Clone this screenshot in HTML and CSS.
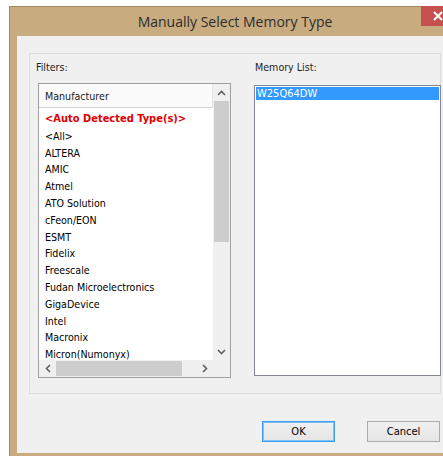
FILE: index.html
```html
<!DOCTYPE html>
<html>
<head>
<meta charset="utf-8">
<title>Manually Select Memory Type</title>
<link rel="stylesheet" href="styles.css">
</head>
<body>
<div class="window">
  <div class="titlebar">
    <span class="title">Manually Select Memory Type</span>
    <div class="close">
      <svg width="10" height="10" viewBox="0 0 10 10"><path d="M1 1 L9 9 M9 1 L1 9" stroke="#fff" stroke-width="2"/></svg>
    </div>
  </div>
  <div class="client">
    <div class="group">
      <div class="col">
        <div class="label label-filters">Filters:</div>
        <div class="listview">
          <div class="lv-body">
            <div class="lv-header"><span>Manufacturer</span></div>
            <ul class="lv-items">
              <li class="auto">&lt;Auto Detected Type(s)&gt;</li>
              <li>&lt;All&gt;</li>
              <li>ALTERA</li>
              <li>AMIC</li>
              <li>Atmel</li>
              <li>ATO Solution</li>
              <li>cFeon/EON</li>
              <li>ESMT</li>
              <li>Fidelix</li>
              <li>Freescale</li>
              <li>Fudan Microelectronics</li>
              <li>GigaDevice</li>
              <li>Intel</li>
              <li>Macronix</li>
              <li>Micron(Numonyx)</li>
            </ul>
          </div>
          <div class="vscroll">
            <div class="sb-btn"><svg width="9" height="6" viewBox="0 0 9 6"><path d="M1 5 L4.5 1.5 L8 5" fill="none" stroke="#606060" stroke-width="1.6"/></svg></div>
            <div class="sb-track"><div class="vthumb"></div></div>
            <div class="sb-btn"><svg width="9" height="6" viewBox="0 0 9 6"><path d="M1 1 L4.5 4.5 L8 1" fill="none" stroke="#606060" stroke-width="1.6"/></svg></div>
          </div>
          <div class="hscroll">
            <div class="sb-btn"><svg width="6" height="9" viewBox="0 0 6 9"><path d="M5 1 L1.5 4.5 L5 8" fill="none" stroke="#606060" stroke-width="1.6"/></svg></div>
            <div class="sb-track htrack"><div class="hthumb"></div></div>
            <div class="sb-btn"><svg width="6" height="9" viewBox="0 0 6 9"><path d="M1 1 L4.5 4.5 L1 8" fill="none" stroke="#606060" stroke-width="1.6"/></svg></div>
          </div>
          <div class="corner"></div>
        </div>
      </div>
      <div class="col">
        <div class="label label-memory">Memory List:</div>
        <div class="listbox">
          <div class="lb-item selected">W25Q64DW</div>
        </div>
      </div>
    </div>
    <div class="buttons">
      <button class="btn btn-default">OK</button>
      <button class="btn">Cancel</button>
    </div>
  </div>
</div>
</body>
</html>
```

FILE: styles.css
```css
html, body {
  margin: 0;
  padding: 0;
}

body {
  width: 443px;
  height: 456px;
  overflow: hidden;
  background: #ffffff;
  font-family: "DejaVu Sans Condensed", "DejaVu Sans", sans-serif;
  font-stretch: condensed;
  font-size: 10.6px;
  color: #000;
}

/* Window frame */
.window {
  position: relative;
  box-sizing: border-box;
  margin: 6px 0 0 9px;
  width: 452px;
  height: 450px;
  background: #c9ab80;
  border: 1px solid #a58b64;
  border-bottom: none;
  padding: 0 7px 3px 7px;
  display: flex;
  flex-direction: column;
}

.titlebar {
  height: 29px;
  flex: none;
  display: flex;
  align-items: center;
  justify-content: center;
}

.title {
  font-family: "Open Sans", "Noto Sans", sans-serif;
  font-stretch: normal;
  font-size: 14px;
  color: #2b2b2b;
}

.close {
  position: absolute;
  top: -1px;
  left: 411px;
  width: 45px;
  height: 20px;
  background: #c75050;
  display: flex;
  align-items: center;
  padding-left: 12px;
  box-sizing: border-box;
}

/* Client area */
.client {
  flex: 1;
  background: #f0f0f0;
  padding: 17px 12px 0 12px;
  display: flex;
  flex-direction: column;
}

.group {
  box-sizing: border-box;
  height: 341px;
  border: 1px solid #dcdcdc;
  padding: 0 0 0 8px;
  display: grid;
  grid-template-columns: 193px 187px;
  column-gap: 23px;
}

.col {
  display: flex;
  flex-direction: column;
}

.label {
  color: #1e1e1e;
  line-height: 14px;
  padding-top: 6px;
}

.label-filters {
  margin-left: -2px;
  margin-bottom: 9px;
}

.label-memory {
  margin-left: 1px;
  margin-bottom: 11px;
}

/* Manufacturer list view */
.listview {
  box-sizing: border-box;
  width: 193px;
  height: 295px;
  border: 1px solid #a0a0a0;
  background: #fff;
  display: grid;
  grid-template-columns: 1fr 17px;
  grid-template-rows: 1fr 17px;
  overflow: hidden;
}

.lv-body {
  overflow: hidden;
}

.lv-header {
  height: 24px;
  box-sizing: border-box;
  border-bottom: 1px solid #d5d5d5;
  border-right: 1px solid #e5e5e5;
  background: #fbfbfb;
  display: flex;
  align-items: center;
  padding-left: 6px;
  color: #1a1a1a;
}

.lv-items {
  list-style: none;
  margin: 0;
  padding: 3px 0 0 0;
}

.lv-items li {
  line-height: 16.8px;
  padding-left: 6px;
  white-space: nowrap;
}

.lv-items li.auto {
  color: #e00000;
  font-weight: bold;
  font-size: 11px;
}

.vscroll {
  background: #f0f0f0;
  display: flex;
  flex-direction: column;
}

.sb-btn {
  flex: none;
  width: 17px;
  height: 17px;
  display: flex;
  align-items: center;
  justify-content: center;
}

.sb-track {
  flex: 1;
  display: flex;
  flex-direction: column;
}

.vthumb {
  margin: 0 1px;
  height: 141px;
  background: #cdcdcd;
}

.hscroll {
  background: #f0f0f0;
  display: flex;
}

.htrack {
  flex-direction: row;
}

.hthumb {
  margin: 1px 0;
  width: 126px;
  background: #cdcdcd;
}

.corner {
  background: #f0f0f0;
}

/* Memory list box */
.listbox {
  box-sizing: border-box;
  width: 187px;
  height: 291px;
  border: 1px solid #828790;
  background: #fff;
  padding: 1px;
}

.lb-item {
  line-height: 13px;
  padding-left: 1px;
  white-space: nowrap;
  font-size: 11px;
}

.lb-item.selected {
  background: #3399ff;
  color: #fff;
}

/* Dialog buttons */
.buttons {
  display: flex;
  justify-content: flex-end;
  gap: 32px;
  margin-top: 27px;
  padding-right: 1px;
}

.btn {
  box-sizing: border-box;
  width: 73px;
  height: 21px;
  font-family: "DejaVu Sans Condensed", "DejaVu Sans", sans-serif;
  font-stretch: condensed;
  font-size: 11px;
  color: #000;
  border: 1px solid #acacac;
  background: linear-gradient(#f0f0f0, #e5e5e5);
  padding: 0;
}

.btn-default {
  border-color: #3c9cf0;
  box-shadow: inset 0 0 0 1px #7fc1f5;
}
```
